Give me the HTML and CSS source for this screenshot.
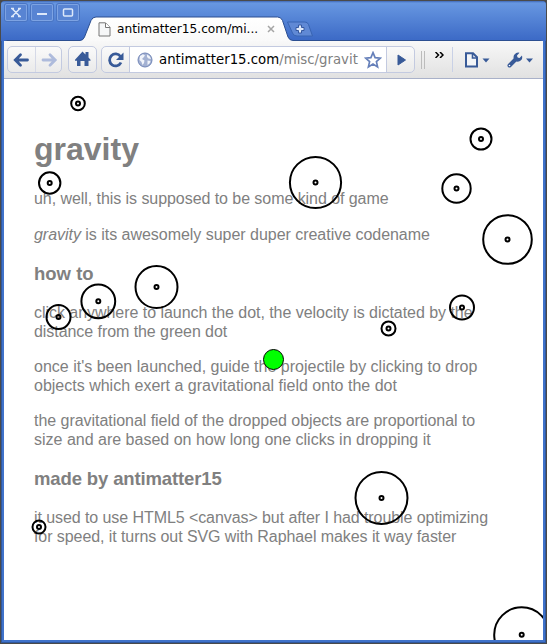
FILE: index.html
```html
<!DOCTYPE html>
<html lang="en">
<head>
<meta charset="utf-8">
<title>gravity</title>
<link rel="stylesheet" href="styles.css">
</head>
<body>
<div class="window">
  <header class="titlebar">
    <svg class="tab-shape" width="545" height="40" viewBox="1 1 545 40">
      <defs>
        <linearGradient id="tab" x1="0" y1="0" x2="0" y2="1"><stop offset="0" stop-color="#fff"/><stop offset="1" stop-color="#f8f8f8"/></linearGradient>
      </defs>
      <path d="M4 45V43Q4 40.500 7 40.500H80Q83 40.500 84.500 37L91 20.500Q92.500 17 96 17H277.500Q281 17 282.500 20.500L288 37Q289.500 40.500 293 40.500H540Q543 40.500 543 43V45Z" fill="url(#tab)" stroke="#2c4f91"/>
      <path d="M289 22H305Q307.500 22 308.500 24.500L312.500 36H297Q293.500 36 292.500 33L287.500 22Z" fill="#6089d5" stroke="#3864b3"/>
      <path d="M298.500 25h3v2.500h2.500v3h-2.500v2.500h-3v-2.500h-2.500v-3h2.500z" fill="#dfe9fa" stroke="#3659a0"/>
    </svg>
    <div class="controls">
      <span class="control"><svg width="22" height="17"><path d="M7.500 5l7 7m0-7l-7 7M6 4.500h3m4 0h3M6 12.500h3m4 0h3" stroke="#dce8fa" stroke-width="1.500"/></svg></span>
      <span class="control"><svg width="22" height="17"><path d="M6 10h10" stroke="#dce8fa" stroke-width="2"/></svg></span>
      <span class="control"><svg width="22" height="17"><rect x="6.500" y="5" width="9" height="7" rx="1" fill="none" stroke="#dce8fa" stroke-width="1.500"/></svg></span>
    </div>
    <div class="tab">
      <svg width="13" height="15"><path d="M1 .8h6.500l4.500 4.500v8.700h-11z" fill="#f6f7f8" stroke="#777"/><path d="M7.500 1v4.500h4.500" fill="#fff" stroke="#777"/></svg>
      <span class="tab-title">antimatter15.com/mi...</span>
      <svg width="8" height="8"><path d="M1 1l6 6m0-6l-6 6" stroke="#a5a5a5" stroke-width="1.500"/></svg>
    </div>
  </header>
  <nav class="toolbar">
    <div class="group nav">
      <span class="cell"><svg width="27" height="26"><path d="M7.500 13h12M12.500 7.800L7.300 13l5.200 5.200" fill="none" stroke="#385a98" stroke-width="2.800" stroke-linecap="round"/></svg></span>
      <span class="cell"><svg width="26" height="26"><path d="M7 13h12M14 7.800l5.200 5.200-5.200 5.200" fill="none" stroke="#aebbdc" stroke-width="2.800" stroke-linecap="round"/></svg></span>
    </div>
    <div class="group home"><svg width="27" height="26"><path d="M6 12.800L13.500 4.500l3 3V5h3v5.500l2 2.300v1h-2V19h-4v-5h-4v5H8v-5.200H6z" fill="#395b99"/></svg></div>
    <div class="group address">
      <span class="reload"><svg width="27" height="26"><path d="M18.500 9.500a6 6 0 1 0 .5 6" fill="none" stroke="#385a98" stroke-width="2.800"/><path d="M21.500 5.500v7.500h-7.500z" fill="#385a98"/></svg></span>
      <div class="field">
        <svg class="globe" width="16" height="16"><circle cx="8" cy="8" r="7" fill="#a3b1d2" stroke="#7185b6"/><path d="M3 4l3-1.700 2 1.200-1.500 2L5 7l2.500 1.500-.5 2.500-1.500 2-1-3L2.500 8zM10 2.500l2.500 1.500 1.500 3-2.500-.5-1.500-1.500zM10.500 8.500l3 .5-1 2.500-2 1.500z" fill="#f1f4fa"/></svg>
        <span class="url"><b>antimatter15.com</b>/misc/gravit</span>
        <svg class="star" width="18" height="18"><path d="M9 1.700l2.100 4.900 5.300.5-4 3.500 1.200 5.300L9 13.100l-4.600 2.800 1.200-5.300-4-3.500 5.300-.5z" fill="#fff" stroke="#6680ba" stroke-width="1.700"/></svg>
      </div>
      <span class="go"><svg width="27" height="26"><path d="M11 8l7.500 5-7.500 5z" fill="#385a98" stroke="#385a98"/></svg></span>
    </div>
    <span class="grip"></span>
    <svg class="overflow" width="9" height="6"><path d="M.5 0l3 3-3 3M5 0l3 3-3 3" fill="none" stroke="#000" stroke-width="1.500"/></svg>
    <span class="divider"></span>
    <svg class="page-menu" width="25" height="16"><path d="M1 1.200h7l4 4v9.300H1z" fill="#f3f5f8" stroke="#385a98" stroke-width="2"/><path d="M7.500 1v5h5" fill="none" stroke="#385a98" stroke-width="1.600"/><path d="M17.500 6.500h7l-3.500 4z" fill="#385a98"/></svg>
    <svg class="tools-menu" width="27" height="16"><path d="M2.500 13.500L9 7" stroke="#385a98" stroke-width="4" stroke-linecap="round"/><path d="M12.500.8L10 3.500l.5 2 2 .5L15 3.500q1 4-2 5.500t-5.500-.5Q5.500 5 7.500 2.500t5-1.700z" fill="#385a98"/><circle cx="2.500" cy="13.500" r=".8" fill="#fff"/><path d="M19 6.500h7l-3.500 4z" fill="#385a98"/></svg>
  </nav>
  <main class="page">
    <h1>gravity</h1>
    <p class="snug">uh, well, this is supposed to be some kind of game</p>
    <p class="codename"><em>gravity</em> is its awesomely super duper creative codename</p>
    <h3>how to</h3>
    <p><span class="close">click anywhere to launch the dot, the velocity is dictated by the</span><br><span class="snug">distance from the green dot</span></p>
    <p>once it's been launched, guide the projectile by clicking to drop<br>objects which exert a gravitational field onto the dot</p>
    <p><span class="close">the gravitational field of the dropped objects are proportional to</span><br>size and are based on how long one clicks in dropping it</p>
    <h3 class="credits">made by antimatter15</h3>
    <p class="tight">it used to use HTML5 &lt;canvas&gt; but after I had trouble optimizing<br>for speed, it turns out SVG with Raphael makes it way faster</p>
    <svg class="field-map" width="539" height="561" viewBox="4 79 539 561">
      <g fill="none" stroke="#000" stroke-width="2">
        <circle cx="78" cy="103.500" r="6.800"/><circle cx="78" cy="103.500" r="2"/>
        <circle cx="49.700" cy="183" r="10.700"/><circle cx="49.700" cy="183" r="2"/>
        <circle cx="315.500" cy="182.500" r="25.600"/><circle cx="315.500" cy="182.500" r="2"/>
        <circle cx="481" cy="139" r="10.500"/><circle cx="481" cy="139" r="2"/>
        <circle cx="456.500" cy="188.500" r="14.200"/><circle cx="456.500" cy="188.500" r="2"/>
        <circle cx="507.500" cy="239.500" r="24.300"/><circle cx="507.500" cy="239.500" r="2"/>
        <circle cx="462" cy="307.500" r="12"/><circle cx="462" cy="307.500" r="2"/>
        <circle cx="388.500" cy="328.500" r="7"/><circle cx="388.500" cy="328.500" r="2"/>
        <circle cx="156.500" cy="287" r="21"/><circle cx="156.500" cy="287" r="2"/>
        <circle cx="98.300" cy="301.300" r="16.900"/><circle cx="98.300" cy="301.300" r="2"/>
        <circle cx="58.500" cy="317" r="12"/><circle cx="58.500" cy="317" r="2"/>
        <circle cx="381.500" cy="498" r="26"/><circle cx="381.500" cy="498" r="2"/>
        <circle cx="39" cy="527" r="6.500"/><circle cx="39" cy="527" r="2"/>
        <circle cx="521.700" cy="634.800" r="27.500"/><circle cx="521.700" cy="634.800" r="2"/>
      </g>
      <circle cx="273.500" cy="359.500" r="10" fill="#0f0" stroke="#000"/>
    </svg>
  </main>
</div>
</body>
</html>
```
FILE: styles.css
```css
* { box-sizing: border-box; }
body { margin: 0; background: #4a4a4a; padding: 1px; overflow: hidden; }
svg { display: block; flex: none; }
.window { width: 545px; height: 642px; border-radius: 4px 4px 0 0; overflow: hidden; background: #3f72ca; box-shadow: inset 1px 0 #31589c, inset -1px -1px #31589c; }
.titlebar { position: relative; height: 40px; display: flex; background: linear-gradient(#3f69b8 0, #6797e1 2px, #3d6bc7 38px); }
.tab-shape { position: absolute; left: 0; top: 0; }
.controls { position: relative; display: flex; gap: 4px; padding: 3px 0 0 4px; width: 97px; }
.control { width: 22px; height: 17px; border-radius: 2px; box-shadow: inset 0 0 0 1px #7da3e3, 0 0 0 1px #4a75c3; background: #5884d3; }
.tab { position: relative; display: flex; align-items: center; height: 24px; margin-top: 16px; width: 180px; }
.tab-title { font: 12.2px "DejaVu Sans", sans-serif; color: #000; margin-left: 6px; width: 150px; white-space: nowrap; }
.toolbar { height: 38px; margin: 0 3px 0 3px; display: flex; align-items: center; background: linear-gradient(#f8f8f8, #e1e1e1); border-bottom: 1px solid #a9b1c9; }
.group { height: 27px; display: flex; border: 1px solid #c3cae0; border-radius: 5px; background: linear-gradient(#fafafa, #eaeaea); overflow: hidden; flex: none; }
.nav { width: 55px; margin-left: 3px; }
.cell + .cell { border-left: 1px solid #d5d9e7; }
.home { width: 29px; margin-left: 6px; }
.address { width: 314px; margin-left: 4px; }
.reload { width: 27px; }
.field { width: 258px; display: flex; align-items: center; background: #fff; border: solid #c3cae0; border-width: 0 1px; }
.globe { margin-left: 7px; }
.url { font: 13.3px "DejaVu Sans", sans-serif; color: #808080; white-space: nowrap; width: 201px; margin-left: 6px; }
.url b { font-weight: normal; color: #000; }
.star { margin-left: 4px; }
.grip { width: 4px; height: 18px; margin-left: 6px; border: solid #bcbcbc; border-width: 0 1px; }
.overflow { margin: -10px 0 0 10px; }
.divider { width: 1px; height: 25px; margin-left: 8px; background: #c9d1e6; }
.page-menu { margin-left: 12px; }
.tools-menu { margin-left: 17px; }
.page { position: relative; height: 561px; margin: 0 3px; padding: 52px 0 0 30px; background: #fff; overflow: hidden; color: #808080; font: 16px/19px "Liberation Sans", Arial, sans-serif; }
h1 { margin: 0 0 21px; font-size: 32px; line-height: 37px; }
h3 { margin: 19px 0 18px; font-size: 18.5px; line-height: 22px; }
p { margin: 0 0 16px; white-space: nowrap; }
.codename { margin-top: 17px; letter-spacing: -.03px; }
.close { letter-spacing: -.04px; }
.snug { letter-spacing: -.06px; }
.tight { letter-spacing: -.077px; }
.credits { letter-spacing: -.13px; }
.field-map { position: absolute; left: 0; top: 0; }
```
